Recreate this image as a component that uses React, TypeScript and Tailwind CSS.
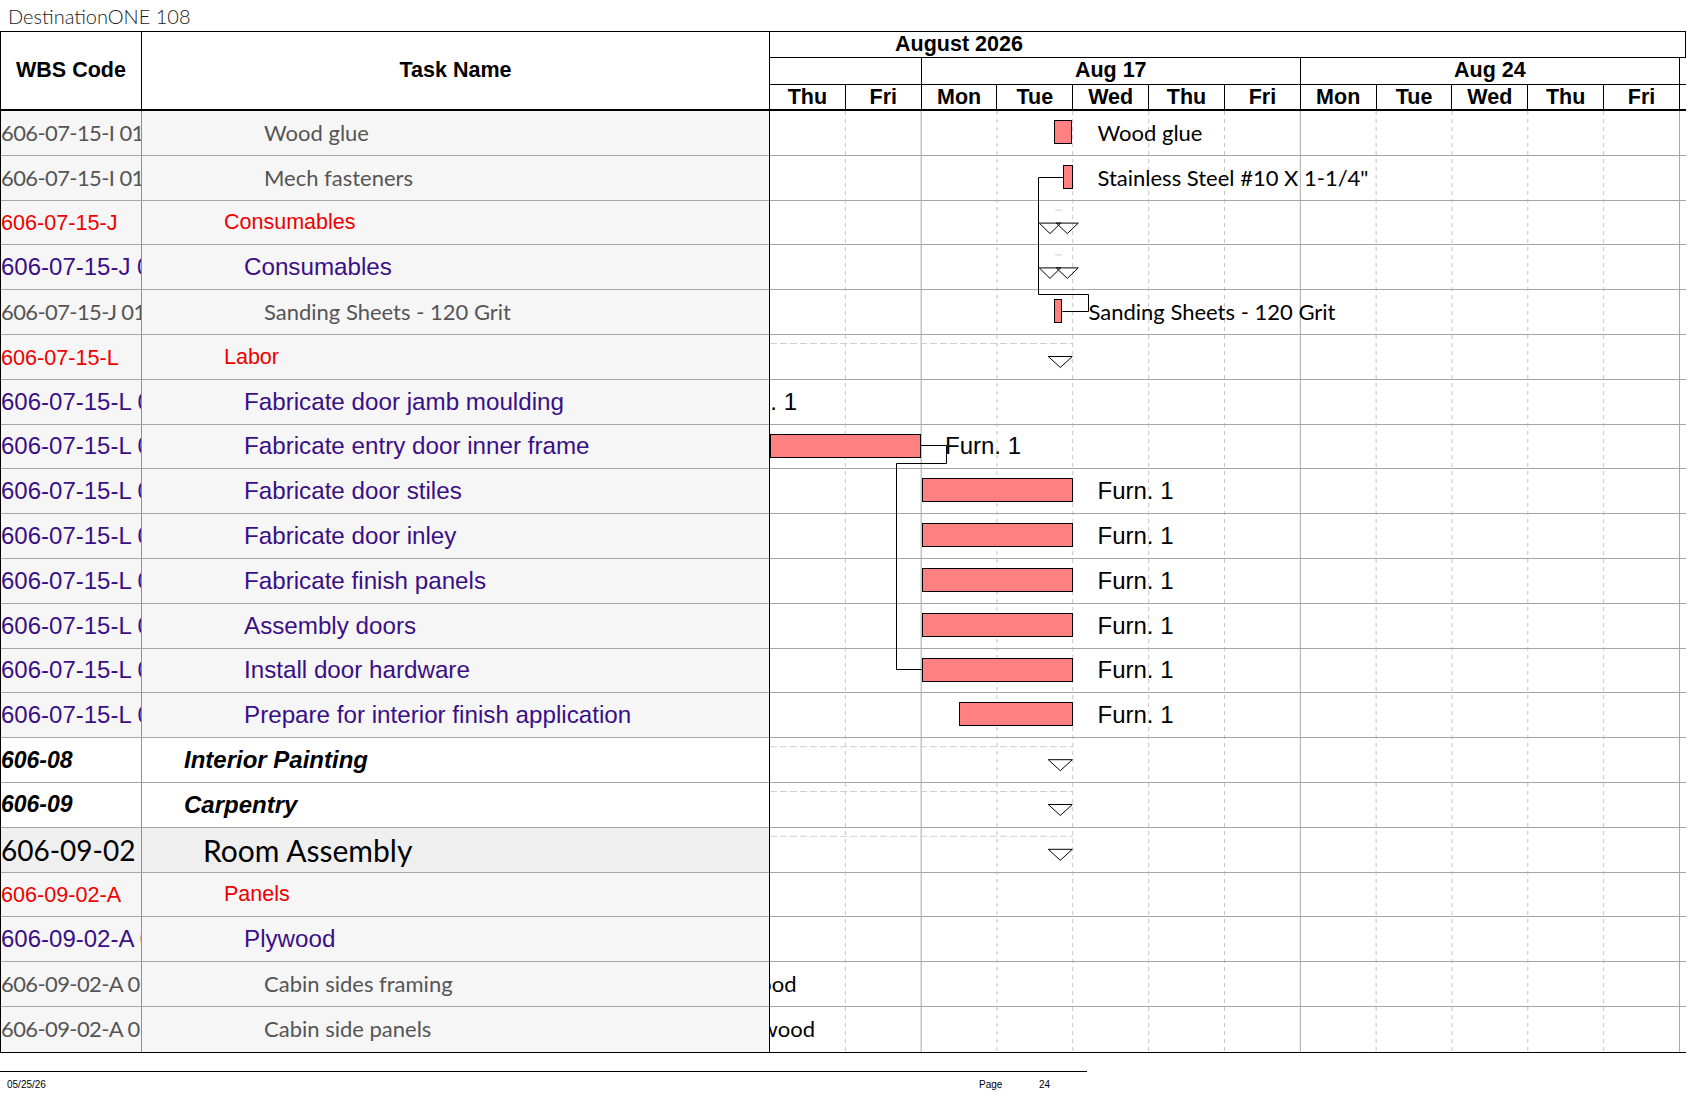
import React from 'react';

const ROW_H = 44.8;
const DAY_W = 75.83;

type Kind = 'item' | 'group' | 'task' | 'phase' | 'section';

type Row = {
  code: string;
  name: string;
  kind: Kind;
  bar?: [number, number];
  label?: { text: string; x: number; font: 'cal' | 'arial'; end?: boolean };
  summary?: 'single' | 'double';
};

const rows: Row[] = [
  { code: '606-07-15-I 01', name: 'Wood glue', kind: 'item', bar: [284, 18.4], label: { text: 'Wood glue', x: 327.5, font: 'cal' } },
  { code: '606-07-15-I 01', name: 'Mech fasteners', kind: 'item', bar: [293.3, 9.4], label: { text: 'Stainless Steel #10 X 1-1/4"', x: 327.5, font: 'cal' } },
  { code: '606-07-15-J', name: 'Consumables', kind: 'group', summary: 'double' },
  { code: '606-07-15-J 01', name: 'Consumables', kind: 'task', summary: 'double' },
  { code: '606-07-15-J 01', name: 'Sanding Sheets - 120 Grit', kind: 'item', bar: [284.3, 8], label: { text: 'Sanding Sheets - 120 Grit', x: 318.5, font: 'cal' } },
  { code: '606-07-15-L', name: 'Labor', kind: 'group', summary: 'single' },
  { code: '606-07-15-L 01', name: 'Fabricate door jamb moulding', kind: 'task', label: { text: 'Furn. 1', x: 27, font: 'arial', end: true } },
  { code: '606-07-15-L 02', name: 'Fabricate entry door inner frame', kind: 'task', bar: [0, 150.7], label: { text: 'Furn. 1', x: 175, font: 'arial' } },
  { code: '606-07-15-L 03', name: 'Fabricate door stiles', kind: 'task', bar: [151.7, 151], label: { text: 'Furn. 1', x: 327.5, font: 'arial' } },
  { code: '606-07-15-L 04', name: 'Fabricate door inley', kind: 'task', bar: [151.7, 151], label: { text: 'Furn. 1', x: 327.5, font: 'arial' } },
  { code: '606-07-15-L 05', name: 'Fabricate finish panels', kind: 'task', bar: [151.7, 151], label: { text: 'Furn. 1', x: 327.5, font: 'arial' } },
  { code: '606-07-15-L 06', name: 'Assembly doors', kind: 'task', bar: [151.7, 151], label: { text: 'Furn. 1', x: 327.5, font: 'arial' } },
  { code: '606-07-15-L 07', name: 'Install door hardware', kind: 'task', bar: [151.7, 151], label: { text: 'Furn. 1', x: 327.5, font: 'arial' } },
  { code: '606-07-15-L 08', name: 'Prepare for interior finish application', kind: 'task', bar: [189.3, 113.4], label: { text: 'Furn. 1', x: 327.5, font: 'arial' } },
  { code: '606-08', name: 'Interior Painting', kind: 'phase', summary: 'single' },
  { code: '606-09', name: 'Carpentry', kind: 'phase', summary: 'single' },
  { code: '606-09-02', name: 'Room Assembly', kind: 'section', summary: 'single' },
  { code: '606-09-02-A', name: 'Panels', kind: 'group' },
  { code: '606-09-02-A 01', name: 'Plywood', kind: 'task' },
  { code: '606-09-02-A 01', name: 'Cabin sides framing', kind: 'item', label: { text: 'Plywood', x: 26.5, font: 'cal', end: true } },
  { code: '606-09-02-A 01', name: 'Cabin side panels', kind: 'item', label: { text: 'Plywood', x: 45, font: 'cal', end: true } },
];

const kinds: Record<Kind, { bg: string; code: string; name: string }> = {
  item: {
    bg: 'bg-[#f6f6f6]',
    code: "[font-family:'Lato',sans-serif] text-[22px] tracking-[-0.6px] text-[#555555]",
    name: "[font-family:'Lato',sans-serif] text-[22px] text-[#555555] pl-[122px]",
  },
  group: {
    bg: 'bg-[#f6f6f6]',
    code: "[font-family:'Liberation_Sans',Arial,sans-serif] text-[21.6px] text-[#ee0000] pt-[1px]",
    name: "[font-family:'Liberation_Sans',Arial,sans-serif] text-[21.5px] text-[#ee0000] pl-[82px] pt-[1px]",
  },
  task: {
    bg: 'bg-[#f6f6f6]',
    code: "[font-family:'Liberation_Sans',Arial,sans-serif] text-[24px] text-[#3a0f86]",
    name: "[font-family:'Liberation_Sans',Arial,sans-serif] text-[24.2px] text-[#3a0f86] pl-[102px]",
  },
  phase: {
    bg: 'bg-white',
    code: "[font-family:'Liberation_Sans',Arial,sans-serif] text-[23px] font-bold italic text-black",
    name: "[font-family:'Liberation_Sans',Arial,sans-serif] text-[24px] font-bold italic text-black pl-[42px]",
  },
  section: {
    bg: 'bg-[#efefef]',
    code: "[font-family:'Lato',sans-serif] text-[28px] text-black",
    name: "[font-family:'Lato',sans-serif] text-[30px] text-black pl-[61px]",
  },
};

const days = ['Thu', 'Fri', 'Mon', 'Tue', 'Wed', 'Thu', 'Fri', 'Mon', 'Tue', 'Wed', 'Thu', 'Fri'];

function ChartHeader() {
  return (
    <div className="w-[916px] flex flex-col [font-family:'Liberation_Sans',Arial,sans-serif] font-bold text-[21.5px] leading-none">
      <div className="h-[26px] border-b border-r border-black flex items-center">
        <div className="w-[378px] text-center">August 2026</div>
      </div>
      <div className="h-[27px] border-b border-black flex">
        <div className="w-[151.66px] border-r border-black" />
        <div className="w-[379.15px] border-r border-black flex items-center justify-center">Aug 17</div>
        <div className="w-[379.15px] border-r border-black flex items-center justify-center">Aug 24</div>
        <div className="flex-1" />
      </div>
      <div className="h-[24px] flex">
        {days.map((d, i) => (
          <div key={i} className="w-[75.83px] border-r border-black flex items-center justify-center pt-[2px]">
            {d}
          </div>
        ))}
        <div className="flex-1" />
      </div>
    </div>
  );
}

function Gridlines() {
  const lines = Array.from({ length: 12 }, (_, k) => k + 1);
  return (
    <svg className="absolute inset-0" width={916} height={21 * ROW_H}>
      {lines.map((k) => {
        const x = k * DAY_W - 0.5;
        const solid = k === 2 || k === 7 || k === 12;
        return (
          <line
            key={k}
            x1={x}
            x2={x}
            y1={0}
            y2={21 * ROW_H}
            stroke={solid ? '#a8a8a8' : '#c4c4c4'}
            strokeWidth={1}
            strokeDasharray={solid ? undefined : '4 4'}
          />
        );
      })}
    </svg>
  );
}

function Overlay() {
  return (
    <svg className="absolute inset-0 pointer-events-none" width={916} height={21 * ROW_H}>
      {rows.map((r, i) => {
        const t = i * ROW_H;
        if (r.summary === 'single') {
          return (
            <g key={i}>
              <line x1={0} x2={303} y1={t + 8.5} y2={t + 8.5} stroke="#cfcfcf" strokeDasharray="7 3" />
              <polygon
                points={`278.3,${t + 21.5} 302.3,${t + 21.5} 290.3,${t + 32.5}`}
                fill="white"
                stroke="black"
                strokeWidth={1}
              />
            </g>
          );
        }
        if (r.summary === 'double') {
          return (
            <g key={i}>
              <line x1={285} x2={292} y1={t + 9.5} y2={t + 9.5} stroke="#cfcfcf" />
              <polygon points={`269.3,${t + 22.5} 290.7,${t + 22.5} 280,${t + 33}`} fill="none" stroke="black" />
              <polygon points={`286.3,${t + 22.5} 308.3,${t + 22.5} 297.3,${t + 33}`} fill="none" stroke="black" />
            </g>
          );
        }
        return null;
      })}
      <polyline
        points="293.3,66.5 268.5,66.5 268.5,183.5 318.5,183.5 318.5,200.5 292.3,200.5"
        fill="none"
        stroke="black"
      />
      <polyline
        points="150.7,334.5 176.5,334.5 176.5,352.5 126.5,352.5 126.5,558.5 151.7,558.5"
        fill="none"
        stroke="black"
      />
    </svg>
  );
}

function ChartRow({ row, last }: { row: Row; last: boolean }) {
  const lbl = row.label;
  const fontCls =
    lbl?.font === 'arial'
      ? "[font-family:'Liberation_Sans',Arial,sans-serif] text-[24px]"
      : "[font-family:'Lato',sans-serif] text-[22px]";
  return (
    <div className={`relative h-[44.8px] ${last ? '' : 'border-b border-[#a6a6a6]'}`}>
      {row.bar && (
        <div
          className="absolute top-[9px] h-[24px] bg-[#ff8080] border border-black"
          style={{ left: row.bar[0], width: row.bar[1] }}
        />
      )}
      {lbl && (
        <span
          className={`absolute top-0 h-full flex items-center whitespace-nowrap text-black leading-none ${fontCls} ${
            lbl.end ? 'justify-end w-[160px]' : ''
          }`}
          style={{ left: lbl.end ? lbl.x - 160 : lbl.x }}
        >
          {lbl.text}
        </span>
      )}
    </div>
  );
}

export default function App() {
  return (
    <div className="w-[1687px] h-[1097px] bg-white text-black overflow-hidden">
      <div className="h-[31px] flex items-center pl-[8px] pt-[1px] text-[20px] font-light text-[#1a1a1a] [font-family:'Lato',sans-serif]">
        DestinationONE 108
      </div>

      <div className="w-[1686px] border-t border-l border-b border-black">
        {/* Header */}
        <div className="flex h-[79px] border-b-2 border-black">
          <div className="w-[141px] border-r border-black flex items-center justify-center text-[21.5px] font-bold [font-family:'Liberation_Sans',Arial,sans-serif]">
            WBS Code
          </div>
          <div className="w-[628px] border-r border-black flex items-center justify-center text-[21.5px] font-bold [font-family:'Liberation_Sans',Arial,sans-serif]">
            Task Name
          </div>
          <ChartHeader />
        </div>

        {/* Body */}
        <div className="flex">
          <div className="w-[769px] border-r border-black">
            {rows.map((r, i) => {
              const k = kinds[r.kind];
              const last = i === rows.length - 1;
              return (
                <div key={i} className={`flex h-[44.8px] ${k.bg} ${last ? '' : 'border-b border-[#a6a6a6]'}`}>
                  <div className={`w-[141px] shrink-0 border-r border-[#8f8f8f] overflow-hidden whitespace-nowrap flex items-center leading-none ${k.code}`}>
                    {r.code}
                  </div>
                  <div className={`flex-1 overflow-hidden whitespace-nowrap flex items-center leading-none ${k.name}`}>
                    {r.name}
                  </div>
                </div>
              );
            })}
          </div>

          <div className="relative w-[916px] overflow-hidden">
            <Gridlines />
            {rows.map((r, i) => (
              <ChartRow key={i} row={r} last={i === rows.length - 1} />
            ))}
            <Overlay />
          </div>
        </div>
      </div>

      {/* Footer */}
      <div className="mt-[18px] w-[1087px] border-t border-black">
        <div className="grid grid-cols-[979px_60px_auto] pt-[8px] text-[10px] leading-none [font-family:'Liberation_Sans',Arial,sans-serif]">
          <span className="pl-[7px]">05/25/26</span>
          <span>Page</span>
          <span>24</span>
        </div>
      </div>
    </div>
  );
}
